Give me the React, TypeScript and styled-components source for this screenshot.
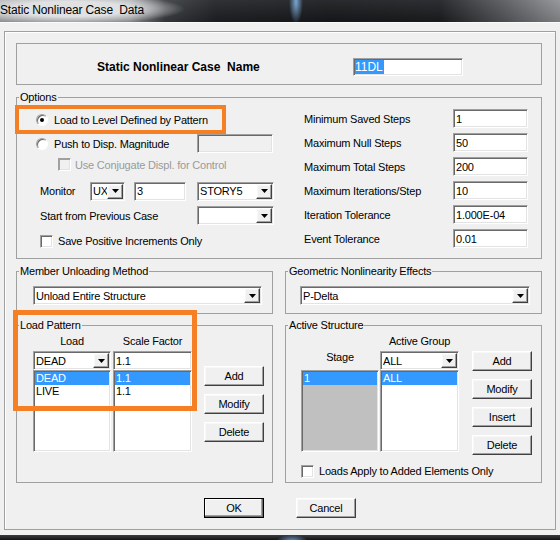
import React from "react";
import styled, { createGlobalStyle, css } from "styled-components";

const FONT = `"Liberation Sans", Arial, sans-serif`;

const GlobalStyle = createGlobalStyle`
  html, body { margin: 0; padding: 0; background: #f0f0f0; }
  body { font-family: ${FONT}; }
  *, *::before, *::after { box-sizing: border-box; }
`;

const sunken = css`
  border: 1px solid;
  border-color: #a0a0a0 #fff #fff #a0a0a0;
  box-shadow: inset 1px 1px 0 #696969, inset -1px -1px 0 #e3e3e3;
`;

const raised = css`
  border: 1px solid;
  border-color: #fff #404040 #404040 #fff;
  box-shadow: inset -1px -1px 0 #a0a0a0, inset 1px 1px 0 #f8f8f8;
  background: #f0f0f0;
`;

const Window = styled.div`
  position: relative;
  width: 560px;
  height: 540px;
  overflow: hidden;
  display: flex;
  flex-direction: column;
  background: #f0f0f0;
  font-family: ${FONT};
  font-size: 11px;
  letter-spacing: -0.2px;
  color: #000;
`;

const TitleBar = styled.div`
  flex: none;
  height: 23px;
  display: flex;
  align-items: center;
  padding: 0 0 3px 0;
  font-size: 12px;
  letter-spacing: -0.15px;
  white-space: pre;
  color: #000;
  background:
    radial-gradient(ellipse 115px 15px at 70px 9px, rgba(224, 225, 227, 1) 50%, rgba(224, 225, 227, 0) 100%),
    radial-gradient(ellipse 7px 22px at 296px 2px, rgba(130, 180, 230, 0.9), rgba(130, 180, 230, 0) 100%),
    linear-gradient(180deg, rgba(255, 255, 255, 0.08), rgba(0, 0, 0, 0.15) 100%),
    linear-gradient(90deg, #a6a9ac 0, #9a9da0 130px, #3a3d41 165px, #1e2024 215px, #16181b 330px, #1b1d20 440px, #57595d 505px, #8e9093 560px);
`;

const Body = styled.div`
  flex: 1;
  min-height: 0;
  display: flex;
  padding: 8px 4px 5px;
  border-top: 1px solid #fbfbfb;
  margin-top: -1px;
`;

const BottomEdge = styled.div`
  flex: none;
  height: 5px;
  background:
    radial-gradient(ellipse 16px 6px at 292px 6px, rgba(120, 170, 225, 0.9), rgba(120, 170, 225, 0) 100%),
    linear-gradient(180deg, #3a3c40, #121316);
`;

const Frame = styled.div`
  flex: 1;
  display: flex;
  flex-direction: column;
  border: 1px solid #a0a0a0;
  box-shadow: inset 1px 1px 0 #fff;
  padding: 11px 13px 11px 11px;
`;

const NameBox = styled.div`
  flex: none;
  height: 42px;
  border: 1px solid #a0a0a0;
  display: flex;
  align-items: flex-start;
  padding: 14px 78px 0 80px;
`;

const NameLabel = styled.span`
  font-size: 12px;
  font-weight: bold;
  letter-spacing: 0;
  line-height: 18px;
  white-space: pre;
`;

const NameInput = styled.div`
  ${sunken}
  margin-left: auto;
  width: 110px;
  height: 18px;
  background: #fff;
  padding: 1px 0 0 1px;
  display: flex;
  align-items: flex-start;
  font-size: 12px;
  letter-spacing: 0;
`;

const Selected = styled.span`
  background: #3399ff;
  color: #fff;
  line-height: 14px;
  padding: 0 1px 0 0;
`;

const Group = styled.fieldset<{ $h: number; $w?: number; $mt?: number }>`
  flex: none;
  margin: ${(p) => p.$mt ?? 0}px 0 0;
  padding: 0;
  min-width: 0;
  height: ${(p) => p.$h}px;
  width: ${(p) => (p.$w ? `${p.$w}px` : "auto")};
  border: 1px solid #a0a0a0;
`;

const Legend = styled.legend`
  margin-left: 2px;
  padding: 0 1px;
  height: 14px;
  line-height: 14px;
`;

const OptionsBody = styled.div`
  display: flex;
`;

const LeftCol = styled.div`
  flex: none;
  width: 287px;
  padding: 6px 0 0 19px;
  display: flex;
  flex-direction: column;
`;

const RightCol = styled.div`
  flex: 1;
  padding-top: 5px;
  display: flex;
  flex-direction: column;
  gap: 5px;
`;

const Row = styled.div<{ $h: number; $mt?: number; $pl?: number }>`
  display: flex;
  align-items: center;
  height: ${(p) => p.$h}px;
  margin-top: ${(p) => p.$mt ?? 0}px;
  padding-left: ${(p) => p.$pl ?? 0}px;
  white-space: pre;
`;

const FieldLabel = styled.span<{ $w?: number; $disabled?: boolean }>`
  flex: none;
  width: ${(p) => (p.$w ? `${p.$w}px` : "auto")};
  white-space: pre;
  color: ${(p) => (p.$disabled ? "#9a9a9a" : "#000")};
`;

const RadioMark = styled.span<{ $on?: boolean }>`
  position: relative;
  flex: none;
  width: 12px;
  height: 12px;
  margin-right: 6px;
  border-radius: 50%;
  border: 1px solid;
  border-color: #a0a0a0 #fff #fff #a0a0a0;
  box-shadow: inset 1px 1px 0 #696969;
  background: #fff;
  &::after {
    content: "";
    display: ${(p) => (p.$on ? "block" : "none")};
    position: absolute;
    left: 3px;
    top: 3px;
    width: 4px;
    height: 4px;
    border-radius: 50%;
    background: #000;
  }
`;

const CheckBox = styled.span<{ $disabled?: boolean; $mr?: number }>`
  flex: none;
  width: 13px;
  height: 13px;
  margin-right: ${(p) => p.$mr ?? 5}px;
  border: 1px solid;
  border-color: #a0a0a0 #fff #fff #a0a0a0;
  box-shadow: inset 1px 1px 0 ${(p) => (p.$disabled ? "#a0a0a0" : "#696969")},
    inset -1px -1px 0 #e3e3e3;
  background: ${(p) => (p.$disabled ? "#f0f0f0" : "#fff")};
`;

const TextBox = styled.div<{ $w?: number; $h?: number; $ml?: number; $disabled?: boolean }>`
  ${sunken}
  flex: none;
  width: ${(p) => (p.$w ? `${p.$w}px` : "auto")};
  height: ${(p) => p.$h ?? 19}px;
  margin-left: ${(p) => p.$ml ?? 0}px;
  padding: 0 2px;
  display: flex;
  align-items: center;
  white-space: pre;
  background: ${(p) => (p.$disabled ? "#f0f0f0" : "#fff")};
`;

const ComboBox = styled.div<{ $w?: number; $ml?: number }>`
  ${sunken}
  flex: none;
  width: ${(p) => (p.$w ? `${p.$w}px` : "auto")};
  height: 19px;
  margin-left: ${(p) => p.$ml ?? 0}px;
  padding: 1px;
  display: flex;
  align-items: stretch;
  background: #fff;
`;

const ComboText = styled.span`
  flex: 1;
  min-width: 0;
  padding-left: 1px;
  display: flex;
  align-items: center;
  overflow: hidden;
  white-space: pre;
`;

const DropButton = styled.span`
  ${raised}
  flex: none;
  width: 16px;
  display: flex;
  align-items: center;
  justify-content: center;
`;

const Arrow = () => (
  <svg width="7" height="4" viewBox="0 0 7 4">
    <path d="M0 0h7L3.5 4z" fill="#000" />
  </svg>
);

const Combo = ({ w, ml, text }: { w?: number; ml?: number; text?: string }) => (
  <ComboBox $w={w} $ml={ml}>
    <ComboText>{text}</ComboText>
    <DropButton>
      <Arrow />
    </DropButton>
  </ComboBox>
);

const PairRow = styled.div<{ $mt?: number }>`
  flex: none;
  display: flex;
  gap: 12px;
  margin-top: ${(p) => p.$mt ?? 0}px;
`;

const ComboPad = styled.div<{ $pl: number; $pr: number }>`
  display: flex;
  flex-direction: column;
  padding: 8px ${(p) => p.$pr}px 0 ${(p) => p.$pl}px;
`;

const ListArea = styled.div<{ $pl: number }>`
  display: flex;
  align-items: flex-start;
  padding-left: ${(p) => p.$pl}px;
`;

const ListColumn = styled.div<{ $w: number; $ml?: number }>`
  flex: none;
  width: ${(p) => p.$w}px;
  margin-left: ${(p) => p.$ml ?? 0}px;
  display: flex;
  flex-direction: column;
  align-items: stretch;
`;

const ColHeader = styled.div<{ $mt?: number; $mb?: number }>`
  height: 14px;
  line-height: 14px;
  margin-top: ${(p) => p.$mt ?? 0}px;
  margin-bottom: ${(p) => p.$mb ?? 0}px;
  text-align: center;
  white-space: pre;
`;

const ListBox = styled.div<{ $gray?: boolean }>`
  ${sunken}
  height: 82px;
  padding: 1px;
  background: ${(p) => (p.$gray ? "#c0c0c0" : "#fff")};
`;

const ListItem = styled.div<{ $sel?: boolean }>`
  height: 13px;
  line-height: 13px;
  padding-left: 1px;
  white-space: pre;
  background: ${(p) => (p.$sel ? "#3399ff" : "transparent")};
  color: ${(p) => (p.$sel ? "#fff" : "#000")};
`;

const ButtonColumn = styled.div<{ $ml: number; $pt: number }>`
  flex: none;
  display: flex;
  flex-direction: column;
  gap: 8px;
  margin-left: ${(p) => p.$ml}px;
  padding-top: ${(p) => p.$pt}px;
`;

const PushButton = styled.button<{ $default?: boolean }>`
  ${raised}
  width: 60px;
  height: 20px;
  padding: 0;
  margin: 0;
  font: inherit;
  letter-spacing: inherit;
  color: #000;
  display: flex;
  align-items: center;
  justify-content: center;
  ${(p) =>
    p.$default &&
    css`
      border: 1px solid #000;
      box-shadow: inset -1px -1px 0 #696969, inset -2px -2px 0 #a0a0a0, inset 1px 1px 0 #fff;
    `}
`;

const CheckRow = styled.div`
  display: flex;
  align-items: center;
  height: 20px;
  margin-top: 6px;
  padding-left: 15px;
  white-space: pre;
`;

const DialogButtons = styled.div`
  flex: none;
  display: flex;
  gap: 32px;
  margin-top: 15px;
  padding-left: 188px;
`;

const Highlight = styled.div<{ $x: number; $y: number; $w: number; $h: number; $t: number }>`
  position: absolute;
  left: ${(p) => p.$x}px;
  top: ${(p) => p.$y}px;
  width: ${(p) => p.$w}px;
  height: ${(p) => p.$h}px;
  border: ${(p) => p.$t}px solid #f47f24;
  pointer-events: none;
`;

const stepRows: [string, string][] = [
  ["Minimum Saved Steps", "1"],
  ["Maximum Null Steps", "50"],
  ["Maximum Total Steps", "200"],
  ["Maximum Iterations/Step", "10"],
  ["Iteration Tolerance", "1.000E-04"],
  ["Event Tolerance", "0.01"],
];

export default function App() {
  return (
    <>
      <GlobalStyle />
      <Window>
        <TitleBar>Static Nonlinear Case  Data</TitleBar>
        <Body>
          <Frame>
            <NameBox>
              <NameLabel>Static Nonlinear Case  Name</NameLabel>
              <NameInput>
                <Selected>11DL</Selected>
              </NameInput>
            </NameBox>

            <Group $h={169} $mt={5}>
              <Legend>Options</Legend>
              <OptionsBody>
                <LeftCol>
                  <Row $h={20}>
                    <RadioMark $on />
                    <FieldLabel>Load to Level Defined by Pattern</FieldLabel>
                  </Row>
                  <Row $h={19} $mt={4}>
                    <RadioMark />
                    <FieldLabel $w={143}>Push to Disp. Magnitude</FieldLabel>
                    <TextBox $w={76} $disabled />
                  </Row>
                  <Row $h={19} $mt={2} $pl={22}>
                    <CheckBox $disabled $mr={4} />
                    <FieldLabel $disabled>Use Conjugate Displ. for Control</FieldLabel>
                  </Row>
                  <Row $h={20} $mt={7} $pl={4}>
                    <FieldLabel $w={50}>Monitor</FieldLabel>
                    <Combo w={35} text="UX" />
                    <TextBox $w={52} $ml={9}>3</TextBox>
                    <Combo w={77} ml={11} text="STORY5" />
                  </Row>
                  <Row $h={19} $mt={5} $pl={4}>
                    <FieldLabel $w={157}>Start from Previous Case</FieldLabel>
                    <Combo w={77} />
                  </Row>
                  <Row $h={20} $mt={6} $pl={4}>
                    <CheckBox />
                    <FieldLabel>Save Positive Increments Only</FieldLabel>
                  </Row>
                </LeftCol>
                <RightCol>
                  {stepRows.map(([label, value]) => (
                    <Row $h={19} key={label}>
                      <FieldLabel $w={149}>{label}</FieldLabel>
                      <TextBox $w={75}>{value}</TextBox>
                    </Row>
                  ))}
                </RightCol>
              </OptionsBody>
            </Group>

            <PairRow $mt={5}>
              <Group $h={50} $w={257}>
                <Legend>Member Unloading Method</Legend>
                <ComboPad $pl={16} $pr={10}>
                  <Combo text="Unload Entire Structure" />
                </ComboPad>
              </Group>
              <Group $h={50} $w={257}>
                <Legend>Geometric Nonlinearity Effects</Legend>
                <ComboPad $pl={14} $pr={11}>
                  <Combo text="P-Delta" />
                </ComboPad>
              </Group>
            </PairRow>

            <PairRow $mt={4}>
              <Group $h={165} $w={257}>
                <Legend>Load Pattern</Legend>
                <ListArea $pl={16}>
                  <ListColumn $w={78}>
                    <ColHeader $mt={2} $mb={3}>Load</ColHeader>
                    <Combo text="DEAD" />
                    <ListBox>
                      <ListItem $sel>DEAD</ListItem>
                      <ListItem>LIVE</ListItem>
                    </ListBox>
                  </ListColumn>
                  <ListColumn $w={79} $ml={2}>
                    <ColHeader $mt={2} $mb={3}>Scale Factor</ColHeader>
                    <TextBox>1.1</TextBox>
                    <ListBox>
                      <ListItem $sel>1.1</ListItem>
                      <ListItem>1.1</ListItem>
                    </ListBox>
                  </ListColumn>
                  <ButtonColumn $ml={12} $pt={34}>
                    <PushButton>Add</PushButton>
                    <PushButton>Modify</PushButton>
                    <PushButton>Delete</PushButton>
                  </ButtonColumn>
                </ListArea>
              </Group>

              <Group $h={165} $w={257}>
                <Legend>Active Structure</Legend>
                <ListArea $pl={15}>
                  <ListColumn $w={78}>
                    <ColHeader $mt={18} $mb={6}>Stage</ColHeader>
                    <ListBox $gray>
                      <ListItem $sel>1</ListItem>
                    </ListBox>
                  </ListColumn>
                  <ListColumn $w={79} $ml={1}>
                    <ColHeader $mt={2} $mb={3}>Active Group</ColHeader>
                    <Combo text="ALL" />
                    <ListBox>
                      <ListItem $sel>ALL</ListItem>
                    </ListBox>
                  </ListColumn>
                  <ButtonColumn $ml={13} $pt={19}>
                    <PushButton>Add</PushButton>
                    <PushButton>Modify</PushButton>
                    <PushButton>Insert</PushButton>
                    <PushButton>Delete</PushButton>
                  </ButtonColumn>
                </ListArea>
                <CheckRow>
                  <CheckBox />
                  <FieldLabel>Loads Apply to Added Elements Only</FieldLabel>
                </CheckRow>
              </Group>
            </PairRow>

            <DialogButtons>
              <PushButton $default>OK</PushButton>
              <PushButton>Cancel</PushButton>
            </DialogButtons>
          </Frame>
        </Body>
        <BottomEdge />
        <Highlight $x={15} $y={105} $w={211} $h={29} $t={4} />
        <Highlight $x={13} $y={310} $w={184} $h={101} $t={5} />
      </Window>
    </>
  );
}
